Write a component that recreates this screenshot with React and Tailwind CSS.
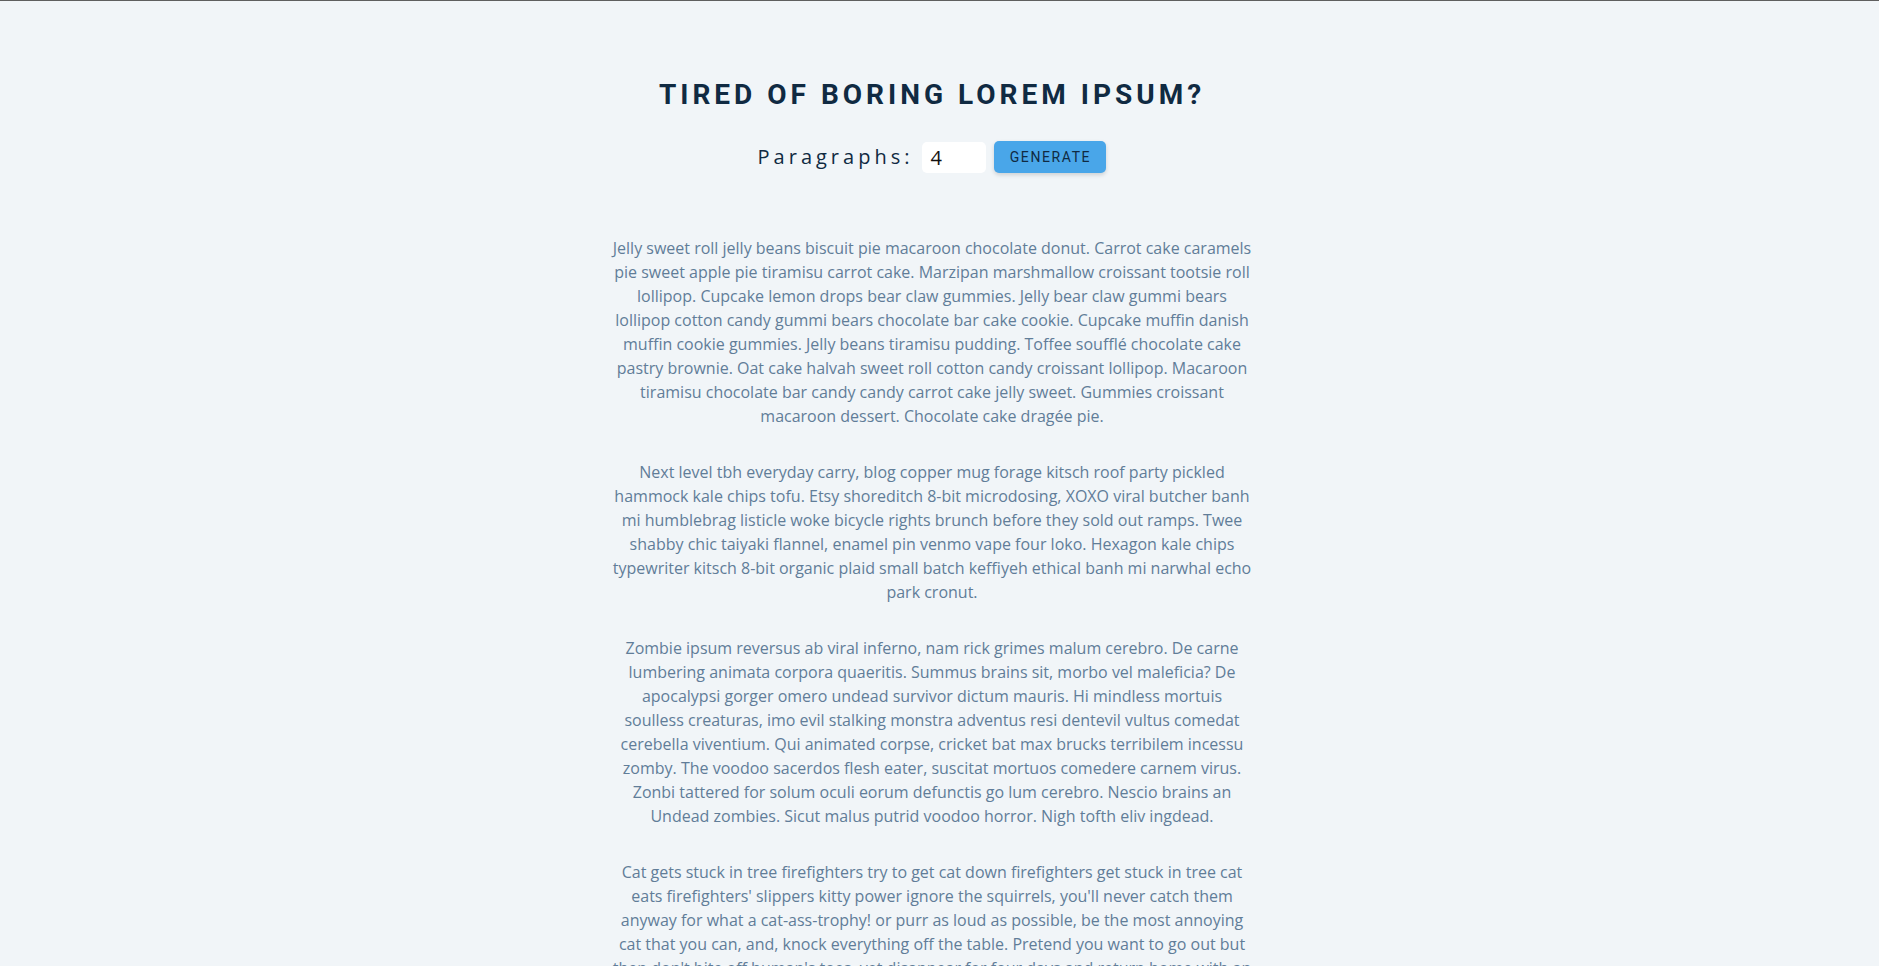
import React, { useState } from "react";

const text = [
  "Jelly sweet roll jelly beans biscuit pie macaroon chocolate donut. Carrot cake caramels pie sweet apple pie tiramisu carrot cake. Marzipan marshmallow croissant tootsie roll lollipop. Cupcake lemon drops bear claw gummies. Jelly bear claw gummi bears lollipop cotton candy gummi bears chocolate bar cake cookie. Cupcake muffin danish muffin cookie gummies. Jelly beans tiramisu pudding. Toffee soufflé chocolate cake pastry brownie. Oat cake halvah sweet roll cotton candy croissant lollipop. Macaroon tiramisu chocolate bar candy candy carrot cake jelly sweet. Gummies croissant macaroon dessert. Chocolate cake dragée pie.",
  "Next level tbh everyday carry, blog copper mug forage kitsch roof party pickled hammock kale chips tofu. Etsy shoreditch 8-bit microdosing, XOXO viral butcher banh mi humblebrag listicle woke bicycle rights brunch before they sold out ramps. Twee shabby chic taiyaki flannel, enamel pin venmo vape four loko. Hexagon kale chips typewriter kitsch 8-bit organic plaid small batch keffiyeh ethical banh mi narwhal echo park cronut.",
  "Zombie ipsum reversus ab viral inferno, nam rick grimes malum cerebro. De carne lumbering animata corpora quaeritis. Summus brains sit, morbo vel maleficia? De apocalypsi gorger omero undead survivor dictum mauris. Hi mindless mortuis soulless creaturas, imo evil stalking monstra adventus resi dentevil vultus comedat cerebella viventium. Qui animated corpse, cricket bat max brucks terribilem incessu zomby. The voodoo sacerdos flesh eater, suscitat mortuos comedere carnem virus. Zonbi tattered for solum oculi eorum defunctis go lum cerebro. Nescio brains an Undead zombies. Sicut malus putrid voodoo horror. Nigh tofth eliv ingdead.",
  "Cat gets stuck in tree firefighters try to get cat down firefighters get stuck in tree cat eats firefighters' slippers kitty power ignore the squirrels, you'll never catch them anyway for what a cat-ass-trophy! or purr as loud as possible, be the most annoying cat that you can, and, knock everything off the table. Pretend you want to go out but then don't bite off human's toes, yet disappear for four days and return home with an expensive injury; bite the vet so catch eat throw up catch eat throw up bad birds.",
];

const App = () => {
  const [count, setCount] = useState(4);
  const [paragraphs, setParagraphs] = useState(text.slice(0, 4));

  const handleSubmit = (e) => {
    e.preventDefault();
    let amount = parseInt(count);
    if (amount <= 0) amount = 1;
    if (amount > 8) amount = 8;
    setParagraphs(text.slice(0, amount));
  };

  return (
    <div className="min-h-screen bg-[#f1f5f8] border-t border-[#5f5f5f] pr-[15px] font-['Open_Sans',sans-serif]">
      <section className="w-[90vw] max-w-[40rem] mx-auto pt-[76px] text-center">
        {/* Title */}
        <h3 className="font-['Roboto',sans-serif] font-bold text-[28px] leading-[36px] tracking-[4px] uppercase text-[#102a42]">
          tired of boring lorem ipsum?
        </h3>

        {/* Form */}
        <form className="mt-[28px] flex justify-center items-center" onSubmit={handleSubmit}>
          <label htmlFor="amount" className="text-[20px] tracking-[4px] text-[#102a42] mr-[9px]">
            Paragraphs:
          </label>
          <input
            type="number"
            name="amount"
            id="amount"
            value={count}
            onChange={(e) => setCount(e.target.value)}
            className="w-[64px] h-[31px] bg-white rounded-[5px] px-[8px] text-[20px] text-[#111] outline-none"
          />
          <button
            type="submit"
            className="ml-[8px] w-[112px] h-[32px] bg-[#49a6e9] rounded-[5px] font-['Roboto',sans-serif] text-[14px] tracking-[1.6px] uppercase text-[#102a42] shadow-[0_2px_4px_rgba(0,0,0,0.15)]"
          >
            generate
          </button>
        </form>

        {/* Generated text */}
        <article className="mt-[63px]">
          {paragraphs.map((p, i) => (
            <p key={i} className="text-[16px] leading-[24px] text-[#617d98] mb-8">
              {p}
            </p>
          ))}
        </article>
      </section>
    </div>
  );
};

export default App;
